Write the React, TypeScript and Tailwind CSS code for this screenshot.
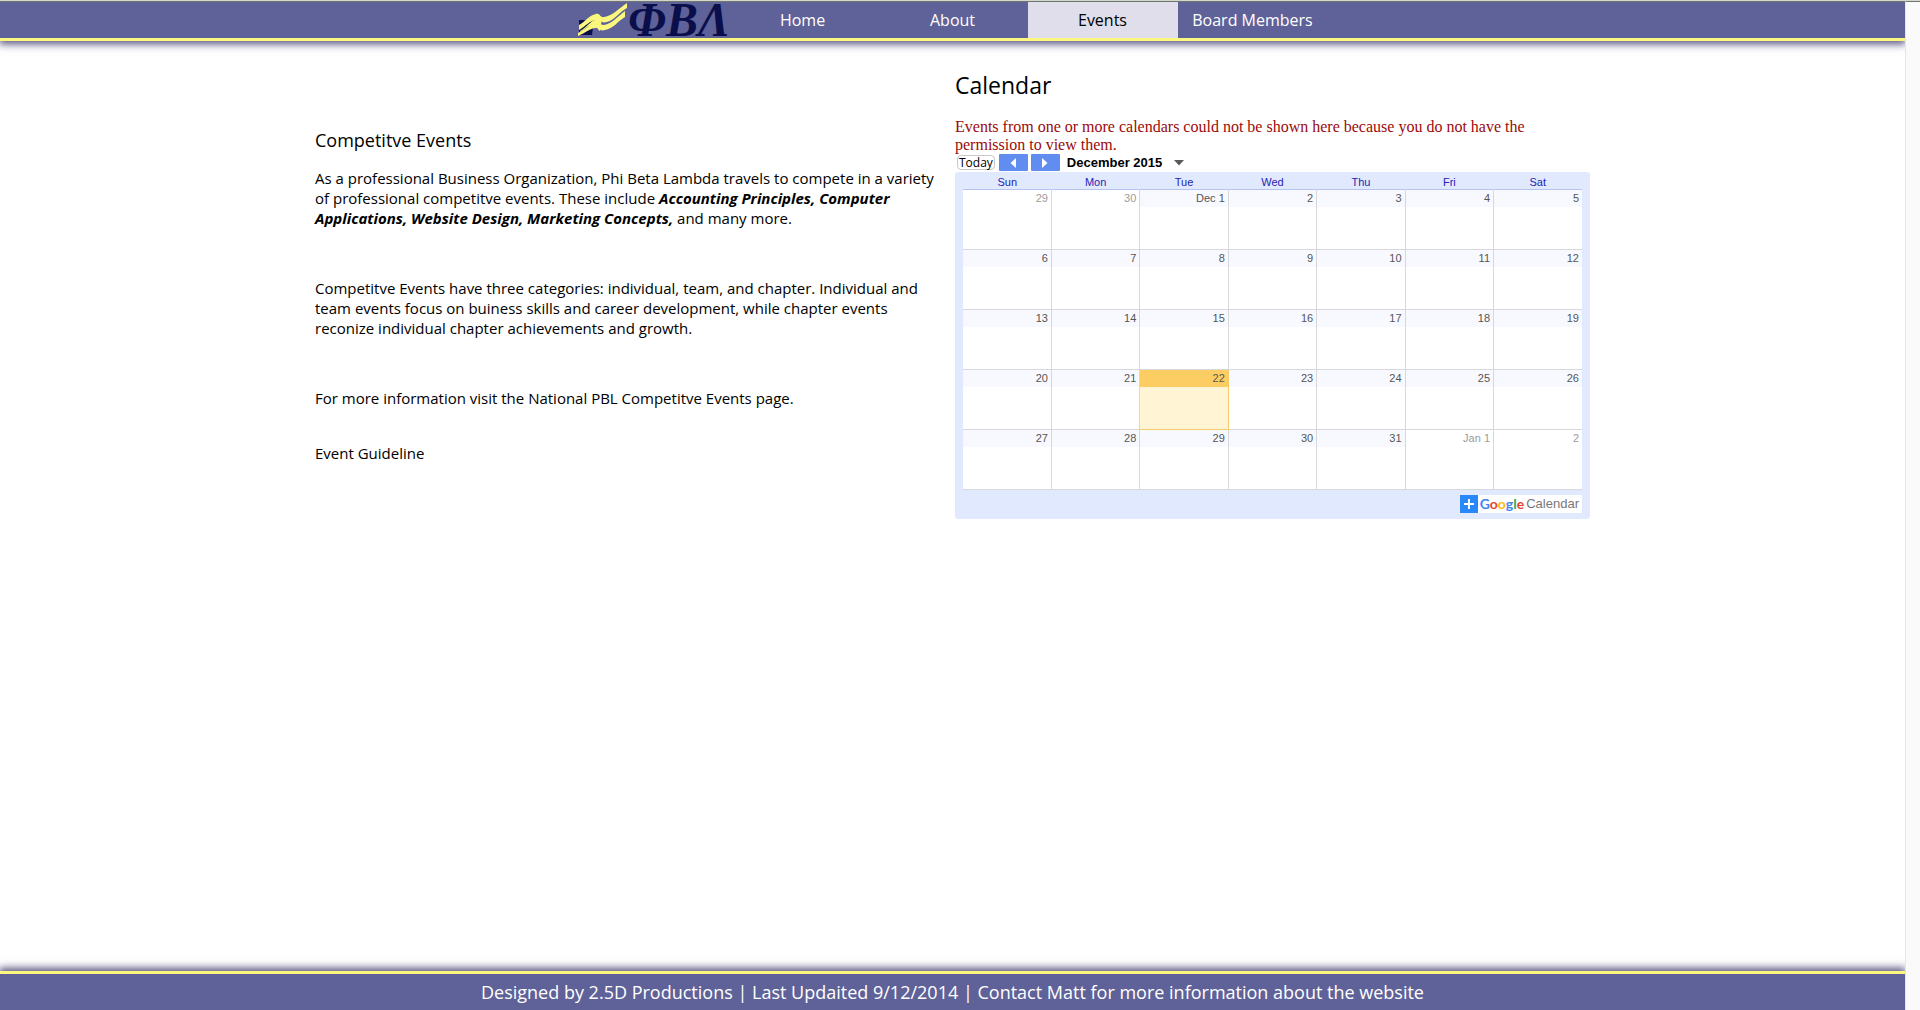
import React from "react";

const navItems = ["Home", "About", "Events", "Board Members"];
const weekdays = ["Sun", "Mon", "Tue", "Wed", "Thu", "Fri", "Sat"];
const weeks = [
  ["29", "30", "Dec 1", "2", "3", "4", "5"],
  ["6", "7", "8", "9", "10", "11", "12"],
  ["13", "14", "15", "16", "17", "18", "19"],
  ["20", "21", "22", "23", "24", "25", "26"],
  ["27", "28", "29", "30", "31", "Jan 1", "2"],
];

function isOutside(week: number, day: number) {
  return (week === 0 && day < 2) || (week === 4 && day > 4);
}

function Logo() {
  return (
    <svg viewBox="0 0 150 36" className="h-9 w-[150px]" role="img" aria-label="Phi Beta Lambda">
      <path d="M1 18 H16 L14 33 H1 Z" fill="#0a0f4c" />
      <path
        d="M1 23 C7 20 11 13 18 12 C22 11 22 16 26 15 C35 14 41 6 49 1 V6 C41 10 37 18 29 20 C23 22 22 17 18 18 C11 19 8 24 1 28 Z"
        fill="#fbf67d"
      />
      <path
        d="M0 31 C7 28 12 22 18 20 C22 19 21 23 26 23 C34 22 40 14 47 9 V15 C40 19 35 27 27 28 C21 30 22 25 17 26 C11 27 7 31 0 34 Z"
        fill="#fbf67d"
      />
      <path d="M2 29 C8 26 12 19 19 17 L22 21 C14 20 9 26 2 30 Z" fill="#fbf67d" />
      <path d="M18 12 C22 11 22 16 24 16 L22 29 C19 27 20 25 17 26 Z" fill="#fbf67d" />
      <text x="50" y="34" fill="#0a0f4c" fontFamily="Liberation Serif, serif" fontStyle="italic" fontWeight="700" fontSize="48">
        ΦΒΛ
      </text>
    </svg>
  );
}

function Header() {
  return (
    <header className="relative border-t border-[#70786f] border-b-[3px] border-b-[#fbf67d] bg-[#5f6298] shadow-[0_2px_8px_1px_#55507c]">
      <nav className="mx-auto flex h-9 w-[750px] max-w-full" aria-label="Main">
        <a href="#home" className="w-[150px]">
          <Logo />
        </a>
        {navItems.map((item) => (
          <a
            key={item}
            href={"#" + item.toLowerCase().replace(" ", "-")}
            aria-current={item === "Events" ? "page" : undefined}
            className="flex w-[150px] items-center justify-center text-base font-medium text-white aria-[current=page]:bg-[#dfdeea] aria-[current=page]:font-normal aria-[current=page]:text-black"
          >
            {item}
          </a>
        ))}
      </nav>
    </header>
  );
}

function Article() {
  return (
    <article className="w-[640px] pt-[87px] pr-4 text-[15px] leading-5">
      <h2 className="mb-4 text-lg leading-6">Competitve Events</h2>
      <p className="mb-[50px]">
        As a professional Business Organization, Phi Beta Lambda travels to compete in a variety of professional
        competitve events. These include{" "}
        <strong className="italic">
          Accounting Principles, Computer Applications, Website Design, Marketing Concepts,
        </strong>{" "}
        and many more.
      </p>
      <p className="mb-[50px]">
        Competitve Events have three categories: individual, team, and chapter. Individual and team events focus on
        buiness skills and career development, while chapter events reconize individual chapter achievements and growth.
      </p>
      <p className="mb-[35px]">
        <a href="#national">For more information visit the National PBL Competitve Events page.</a>
      </p>
      <p>
        <a href="#guideline">Event Guideline</a>
      </p>
    </article>
  );
}

function Toolbar() {
  return (
    <div className="flex h-[18px] items-center pl-0.5 pb-px">
      <button
        type="button"
        className="h-[15px] rounded-[4px] border border-[#c8c8c8] px-px text-xs leading-3 text-black"
      >
        Today
      </button>
      <button
        type="button"
        aria-label="Previous month"
        className="ml-1 flex h-[17px] w-[29px] items-center justify-center rounded-[1px] bg-[#618df0]"
      >
        <svg viewBox="0 0 6 10" className="h-2.5 w-1.5" fill="white">
          <path d="M6 0 L0.500 5 L6 10 Z" />
        </svg>
      </button>
      <button
        type="button"
        aria-label="Next month"
        className="ml-[3px] flex h-[17px] w-[29px] items-center justify-center rounded-[1px] bg-[#618df0]"
      >
        <svg viewBox="0 0 6 10" className="h-2.5 w-1.5" fill="white">
          <path d="M0 0 L5.500 5 L0 10 Z" />
        </svg>
      </button>
      <button
        type="button"
        className="ml-[7px] flex items-center gap-3 font-['Liberation_Sans',sans-serif] text-[13px] leading-4 font-bold text-black"
      >
        December 2015
        <svg viewBox="0 0 10 6" className="h-1.5 w-2.5" fill="#5a5a5a">
          <path d="M0 0 H10 L5 5.500 Z" />
        </svg>
      </button>
    </div>
  );
}

function DayCell({ label, outside, today }: { label: string; outside: boolean; today: boolean }) {
  const cell = today
    ? "border border-[#f6ca66] bg-[#fff4d4]"
    : "border-r border-b border-[#d6d8dc] bg-white last:border-r-0";
  const strip = today ? "bg-[#fccd62] text-[#5c5a52]" : outside ? "bg-white text-[#9c9c9c]" : "bg-[#f8f9ff] text-[#555]";
  return (
    <td className={"h-[60px] p-0 align-top " + cell}>
      <div className={"h-[17px] pr-[3px] text-right text-[11px] leading-4 " + strip}>{label}</div>
    </td>
  );
}

function Calendar() {
  return (
    <section className="w-[635px] pt-7">
      <h1 className="mb-[17px] text-[23px] leading-8">Calendar</h1>
      <p className="pr-10 font-['Liberation_Serif',serif] text-base leading-[18px] text-[#9a0a0a]">
        Events from one or more calendars could not be shown here because you do not have the permission to view them.
      </p>
      <Toolbar />
      <div className="rounded-[3px] bg-[#e1e9ff] px-2 pb-1.5 font-['Liberation_Sans',sans-serif]">
        <table className="w-full table-fixed border-collapse">
          <thead>
            <tr className="h-[17px] border-b border-[#b5c3ee]">
              {weekdays.map((d) => (
                <th key={d} scope="col" className="p-0 pt-[5px] text-center text-[11px] leading-[11px] font-normal text-[#2424b4]">
                  {d}
                </th>
              ))}
            </tr>
          </thead>
          <tbody className="border-b border-[#b5c3e4]">
            {weeks.map((week, w) => (
              <tr key={w}>
                {week.map((label, d) => (
                  <DayCell key={label} label={label} outside={isOutside(w, d)} today={w === 3 && d === 2} />
                ))}
              </tr>
            ))}
          </tbody>
        </table>
        <div className="flex justify-end pt-[5px]">
          <a href="#google-calendar" className="flex h-[18px] items-center bg-white pr-[3px] text-[13px] leading-4 text-[#777]">
            <span className="mr-0.5 flex size-[18px] items-center justify-center bg-[#2a87f7]">
              <svg viewBox="0 0 10 10" className="size-2.5" stroke="white" strokeWidth="2">
                <path d="M5 0 V10 M0 5 H10" />
              </svg>
            </span>
            <span className="mr-0.5 font-['Lato',sans-serif] text-[14px] font-bold">
              <span className="text-[#4285f4]">G</span>
              <span className="text-[#ea4335]">o</span>
              <span className="text-[#fbbc05]">o</span>
              <span className="text-[#4285f4]">g</span>
              <span className="text-[#34a853]">l</span>
              <span className="text-[#ea4335]">e</span>
            </span>
            Calendar
          </a>
        </div>
      </div>
    </section>
  );
}

export default function App() {
  return (
    <div className="flex min-h-screen border-t border-[#d3d6cf] bg-white font-['Open_Sans',sans-serif] text-black">
      <div className="flex min-w-0 flex-1 flex-col overflow-hidden">
        <Header />
        <main className="mx-auto flex w-[1275px] max-w-full flex-1">
          <Article />
          <Calendar />
        </main>
        <footer className="border-t-[3px] border-[#fbf67d] bg-[#5f6298] py-1.5 text-center text-lg leading-6 text-white shadow-[0_-2px_8px_1px_#55507c]">
          Designed by 2.5D Productions | Last Updaited 9/12/2014 |{" "}
          <a href="#contact">Contact Matt for more information about the website</a>
        </footer>
      </div>
      <div className="w-[15px] border-t border-l border-t-[#70786f] border-l-[#e6e6e6] bg-[#fafafa]" />
    </div>
  );
}
